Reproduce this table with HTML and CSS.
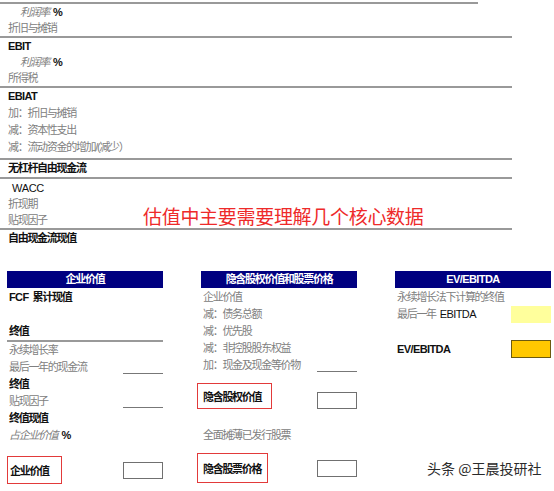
FILE: index.html
```html
<!DOCTYPE html>
<html lang="zh-CN">
<head>
    <meta charset="UTF-8">
    <meta name="viewport" content="width=device-width, initial-scale=1.0">
    <title>估值核心数据</title>
    <link rel="stylesheet" href="styles.css">
</head>
<body>
    <div class="page">
        <!-- DCF steps -->
        <section class="calc">
            <div class="rule rule-short"></div>
            <div class="group">
                <div class="row indent"><i>利润率</i><b class="pct">%</b></div>
                <div class="row">折旧与摊销</div>
            </div>
            <div class="rule"></div>
            <div class="group">
                <div class="row strong latin">EBIT</div>
                <div class="row indent"><i>利润率</i><b class="pct">%</b></div>
                <div class="row">所得税</div>
            </div>
            <div class="rule"></div>
            <div class="group group-wide">
                <div class="row strong latin">EBIAT</div>
                <div class="row">加：折旧与摊销</div>
                <div class="row">减：资本性支出</div>
                <div class="row">减：流动资金的增加/(减少）</div>
            </div>
            <div class="rule"></div>
            <div class="group group-one">
                <div class="row strong">无杠杆自由现金流</div>
            </div>
            <div class="rule"></div>
            <div class="group group-tight">
                <div class="row dark latin wacc">WACC</div>
                <div class="row">折现期</div>
                <div class="row">贴现因子</div>
            </div>
            <div class="rule"></div>
            <div class="group group-one">
                <div class="row strong">自由现金流现值</div>
            </div>
        </section>

        <p class="note">估值中主要需要理解几个核心数据</p>

        <section class="panels">
            <div class="panel">
                <div class="panel-head">企业价值</div>
                <div class="prow strong"><span><span class="latin gap-r">FCF</span>累计现值</span></div>
                <div class="prow"></div>
                <div class="prow strong ruled"><span>终值</span></div>
                <div class="prow"><span>永续增长率</span></div>
                <div class="prow"><span>最后一年的现金流</span><span class="cell-line"></span></div>
                <div class="prow strong"><span>终值</span></div>
                <div class="prow"><span>贴现因子</span><span class="cell-line"></span></div>
                <div class="prow strong"><span>终值现值</span></div>
                <div class="prow"><span><i>占企业价值</i><b class="pct">%</b></span></div>
                <div class="result result-ev">
                    <span class="boxed">企业价值</span>
                    <span class="out"></span>
                </div>
            </div>

            <div class="panel">
                <div class="panel-head">隐含股权价值和股票价格</div>
                <div class="prow"><span>企业价值</span></div>
                <div class="prow"><span>减：债务总额</span></div>
                <div class="prow"><span>减：优先股</span></div>
                <div class="prow"><span>减：非控股股东权益</span></div>
                <div class="prow"><span>加：现金及现金等价物</span><span class="cell-line"></span></div>
                <div class="result result-eq">
                    <span class="boxed boxed-wide">隐含股权价值</span>
                    <span class="out"></span>
                </div>
                <div class="prow shares"><span>全面摊薄已发行股票</span></div>
                <div class="result result-px">
                    <span class="boxed boxed-px">隐含股票价格</span>
                    <span class="out"></span>
                </div>
            </div>

            <div class="panel">
                <div class="panel-head latin">EV/EBITDA</div>
                <div class="prow"><span>永续增长法下计算的终值</span></div>
                <div class="prow"><span>最后一年<span class="latin dark gap-l">EBITDA</span></span><span class="fill-light"></span></div>
                <div class="result result-mult">
                    <span class="strong latin">EV/EBITDA</span>
                    <span class="fill-gold"></span>
                </div>
            </div>
        </section>

        <div class="mark">头条 @王晨投研社</div>
    </div>
</body>
</html>
```

FILE: styles.css
```css
/* flat spreadsheet look, greys + navy headers */
body {
    margin: 0;
    background: #fff;
    color: #808080;
    font-family: "Liberation Sans", "Noto Sans CJK SC", sans-serif;
    font-size: 11px;
    letter-spacing: -1.3px;
}

.page {
    position: relative;
    width: 554px;
    height: 491px;
    overflow: hidden;
}

i {
    font-style: italic;
}

.latin {
    letter-spacing: -0.6px;
}

.gap-r {
    margin-right: 4px;
}

.gap-l {
    margin-left: 4px;
}

.strong {
    color: #111;
    font-weight: 700;
}

.dark {
    color: #111;
}

.pct {
    margin-left: 4px;
    color: #111;
    font-weight: 700;
    letter-spacing: 0;
}

/* top block */
.calc {
    padding-top: 2px;
}

.rule {
    width: 512px;
    height: 2px;
    background: #999;
}

.rule-short {
    width: 478px;
}

.row {
    height: 16px;
    line-height: 16px;
    padding-left: 8px;
    white-space: nowrap;
}

.indent {
    padding-left: 20px;
}

.wacc {
    padding-left: 12px;
    letter-spacing: -0.3px;
}

.group-wide {
    padding-bottom: 2px;
}

.group-wide .row,
.group-one .row {
    height: 17px;
    line-height: 17px;
}

.group-tight {
    padding-top: 1px;
}

.note {
    position: absolute;
    left: 143px;
    top: 207px;
    margin: 0;
    color: #ee2a2a;
    font-size: 19px;
    line-height: 22px;
    letter-spacing: -0.3px;
}

/* three panels */
.panels {
    display: flex;
    gap: 38px;
    margin-top: 24px;
    padding-left: 7px;
}

.panel {
    width: 156px;
}

.panel-head {
    height: 17px;
    line-height: 17px;
    margin-bottom: 1px;
    background: #000080;
    color: #fff;
    font-weight: 700;
    text-align: center;
}

.prow {
    display: flex;
    justify-content: space-between;
    align-items: flex-end;
    height: 17px;
    line-height: 17px;
    padding-left: 2px;
    white-space: nowrap;
}

.prow > span:first-child {
    align-self: center;
}

.ruled {
    border-bottom: 2px solid #999;
}

.cell-line {
    width: 40px;
    height: 14px;
    border-bottom: 1px solid #777;
    margin-bottom: 2px;
}

.shares {
    margin-top: 18px;
}

.result {
    display: flex;
    justify-content: space-between;
    align-items: center;
}

.result-ev {
    margin-top: 12px;
    height: 28px;
}

.result-eq {
    margin-top: 9px;
    margin-left: -4px;
    height: 26px;
    align-items: flex-end;
}

.result-px {
    margin-top: 9px;
    margin-left: -4px;
    height: 30px;
}

.boxed {
    box-sizing: border-box;
    width: 55px;
    height: 100%;
    padding-left: 2px;
    border: 1.5px solid #e23a3a;
    color: #111;
    font-weight: 700;
    display: flex;
    align-items: center;
}

.boxed-wide {
    width: 75px;
    padding-left: 5px;
}

.boxed-px {
    width: 71px;
    padding-left: 5px;
}

.out {
    box-sizing: border-box;
    width: 40px;
    height: 17px;
    border: 1px solid #707070;
    background: #fff;
}

.fill-light {
    width: 40px;
    height: 17px;
    background: #ffff9c;
}

.result-mult {
    margin-top: 17px;
    height: 18px;
    padding-left: 2px;
}

.fill-gold {
    box-sizing: border-box;
    width: 40px;
    height: 18px;
    background: #ffc800;
    border: 1px solid #6b5a10;
}

.mark {
    position: absolute;
    left: 427px;
    top: 459px;
    color: #2a2a2a;
    font-family: "Noto Sans CJK SC", sans-serif;
    font-size: 14px;
    line-height: 18px;
    letter-spacing: 0;
}
```
